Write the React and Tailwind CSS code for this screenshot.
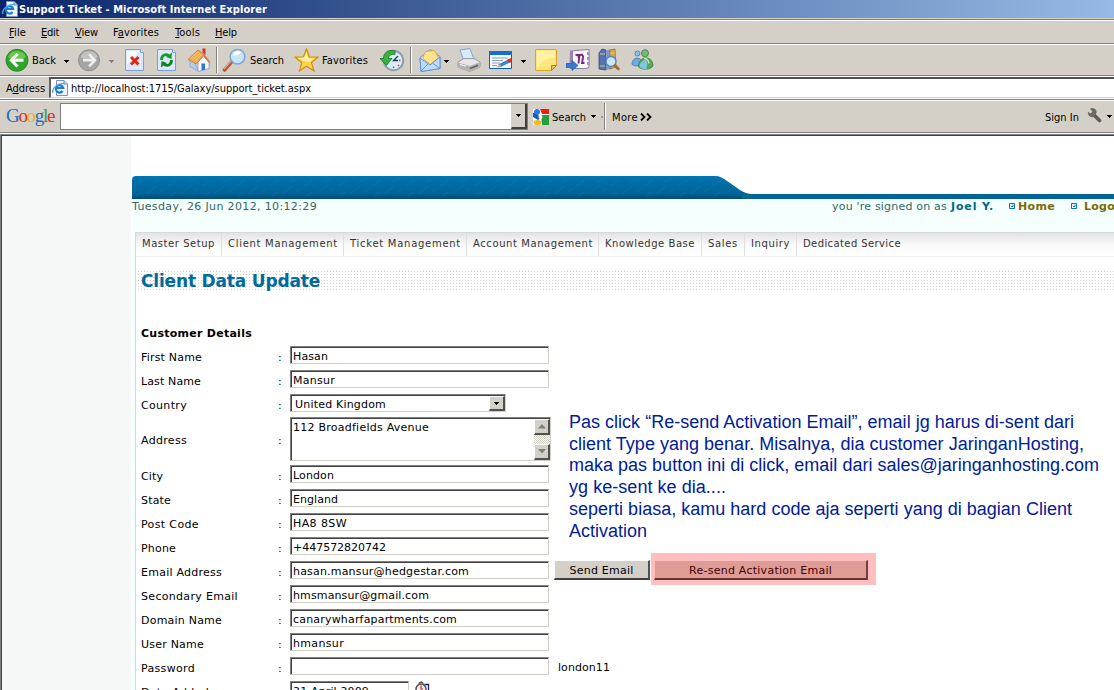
import { useLayoutEffect, useRef } from "react";

/* Single-line text whose letter spacing is adjusted so it fills its box. */
function Text({ children, className = "" }) {
  const ref = useRef(null);
  useLayoutEffect(() => {
    const el = ref.current;
    const inner = el.firstChild;
    const count = inner.textContent.length;
    inner.style.letterSpacing = "0px";
    const natural = inner.getBoundingClientRect().width;
    inner.style.letterSpacing = `${(el.clientWidth - natural) / count}px`;
  }, []);
  return (
    <span ref={ref} className={`block shrink-0 whitespace-nowrap ${className}`}>
      <span className="inline-block">{children}</span>
    </span>
  );
}

const UI = "font-['DejaVu_Sans_Condensed','DejaVu_Sans',sans-serif] text-[11px] leading-[14px]";

function Caret({ className = "", fill = "#000" }) {
  return (
    <svg className={`shrink-0 ${className}`} width="5" height="3" viewBox="0 0 5 3" shapeRendering="crispEdges">
      <path d="M0 0h5v1H0zM1 1h3v1H1zM2 2h1v1H2z" fill={fill} />
    </svg>
  );
}

function Icon({ w = 24, h = 24, className = "", children }) {
  return (
    <svg className={`shrink-0 ${className}`} width={w} height={h} viewBox={`0 0 ${w} ${h}`} fill="none">
      {children}
    </svg>
  );
}

function PageIcon({ className = "" }) {
  return (
    <Icon w={16} h={16} className={className}>
      <path d="M4.500.500h7.500l3.500 3.500v11.500h-11z" fill="#f2f6ff" stroke="#7d8fc0" />
      <path d="M12 .500v3.500h3.500" fill="#c5d3f2" stroke="#7d8fc0" />
      <path d="M10.600 11a3.700 3.700 0 1 1 .6-3H4.500" stroke="#1d7bd6" strokeWidth="2.200" />
      <path d="M1 13C-1 9 6 3 12.500 3.500" stroke="#4aa7ec" strokeWidth="1.300" />
    </Icon>
  );
}

function Divider({ className = "" }) {
  return <div className={`w-[2px] shrink-0 border-l border-[#808080] bg-white ${className}`} />;
}

const menus = [
  ["F", "ile", "w-[17px] ml-[9px]"],
  ["E", "dit", "w-[18px] ml-[15px]"],
  ["V", "iew", "w-[23px] ml-[16px]"],
  ["", "Favorites", "w-[46px] ml-[15px]"],
  ["T", "ools", "w-[25px] ml-[16px]"],
  ["H", "elp", "w-[22px] ml-[15px]"],
];

function MenuBar() {
  return (
    <div className="flex h-[22px] items-center pt-[2px]">
      {menus.map(([key, rest, cls]) => (
        <Text key={rest} className={cls}>
          {key ? (
            <>
              <u>{key}</u>
              {rest}
            </>
          ) : (
            <>
              F<u>a</u>vorites
            </>
          )}
        </Text>
      ))}
    </div>
  );
}

function Toolbar() {
  return (
    <div className="flex h-[30px] items-center">
      <Icon className="ml-[5px]">
        <circle cx="12" cy="12.300" r="11" fill="#2fa52b" stroke="#1b7d1e" strokeWidth=".8" />
        <path d="M3 9a9.500 9 0 0 1 18 0c-4 3-13 4-18 0z" fill="#7fd45f" opacity=".75" />
        <path d="M12.500 6 6.300 12.300l6.200 6.200M7 12.300H18.500" stroke="#fff" strokeWidth="3" />
      </Icon>
      <Text className="ml-[3px] w-[24px] pt-[2px]">Back</Text>
      <Caret className="mt-[2px] ml-[8px]" />
      <Icon className="ml-[8px]">
        <circle cx="12" cy="12.300" r="10.500" fill="#a5a5a3" stroke="#8b8b89" />
        <path d="M3.500 9a9 8.500 0 0 1 17 0c-4 3-12 4-17 0z" fill="#c9c9c7" opacity=".8" />
        <path d="m12 6.300 6 6-6 6M17.500 12.300H6" stroke="#f0f0ee" strokeWidth="2.600" />
      </Icon>
      <Caret className="mt-[2px] ml-[8px]" fill="#808080" />
      <Icon w={20} className="ml-[11px]">
        <path d="M.5 1.500h15l3 3v18H.5z" fill="#dce9fc" stroke="#7b9ddb" />
        <path d="M2 3h12l-6 8-6 5z" fill="#f6faff" />
        <path d="M15.500 1.500v3h3" fill="#fff" stroke="#7b9ddb" />
        <path d="m6 9 7.500 7.500M13.500 9 6 16.500" stroke="#e2280b" strokeWidth="3" />
      </Icon>
      <Icon w={20} className="ml-[12px]">
        <path d="M.5 1.500h15l3 3v18H.5z" fill="#dce9fc" stroke="#7b9ddb" />
        <path d="M15.500 1.500v3h3" fill="#fff" stroke="#7b9ddb" />
        <path d="M4.500 12c0-5 4-6.500 7-4.500" stroke="#159a26" strokeWidth="2.800" />
        <path d="m15 4.500-.5 6.500-5.500-2z" fill="#159a26" />
        <path d="M14.500 12c0 5-4 6.500-7 4.500" stroke="#0d8320" strokeWidth="2.800" />
        <path d="m4 19.500.5-6.500 5.500 2z" fill="#0d8320" />
      </Icon>
      <Icon className="ml-[10px]">
        <path d="m3 13 2-2 6 10.500V23l-8-4.500z" fill="#b7cdf0" stroke="#7c97c9" strokeWidth=".7" />
        <path d="m11 14 5.500-6 5.500 6.500v6L11 23.500z" fill="#f3f8ff" stroke="#7c97c9" strokeWidth=".8" />
        <path d="M14.500 15.500h3.500v6.300l-3.500.7z" fill="#3a72c4" />
        <path d="M1 11.500 11 2l6 4.500-7.500 9.500z" fill="#f2a94b" stroke="#c9742a" strokeWidth=".8" />
        <path d="m3.500 10.500 7-6.500M5.500 12l7.500-6.500M8 13.500l6.500-7" stroke="#ffd791" strokeWidth=".8" />
        <path d="m16.500 6.500 6.300 8" stroke="#d1813a" strokeWidth="1.800" />
        <path d="M15.500.500h3V7l-3-2.500z" fill="#c93d24" />
      </Icon>
      <Divider className="ml-[5px] h-[26px]" />
      <Icon w={25} className="ml-[4px]">
        <path d="m2.500 22 7-8" stroke="#b25b37" strokeWidth="3.600" strokeLinecap="round" />
        <path d="m2 21 7-8" stroke="#eda27f" strokeWidth="1.300" />
        <circle cx="15.500" cy="8.700" r="7.300" fill="#c9e5fb" stroke="#7ba6d8" strokeWidth="1.500" />
        <path d="M11 8a5 5 0 0 1 8-4c-1 3-5 3-8 4z" fill="#fff" />
      </Icon>
      <Text className="ml-[3px] w-[34px] pt-[2px]">Search</Text>
      <Icon w={25} className="ml-[10px]">
        <path d="m12.500 1 2.800 7.800 8.700.2-6.500 5.800 2.500 8.200-7.500-4.700L5.500 23l2.200-8.200L1 9l8.500-.2z" fill="#fbd24a" stroke="#d08d12" strokeWidth="1.200" />
        <path d="M12.500 4 14 10l6 .5-5 3.500-6-1-5-3 6-.5z" fill="#fff1a0" />
      </Icon>
      <Text className="ml-[3px] w-[46px] pt-[2px]">Favorites</Text>
      <Icon w={25} className="ml-[12px]">
        <circle cx="13.500" cy="12.500" r="9.700" fill="#d9ecfa" stroke="#8d9fae" strokeWidth="2" />
        <path d="M13.500 18.500V20M20.500 12.500H19M18 17l1 1" stroke="#e33b2f" strokeWidth="1.500" />
        <path d="m18 8-4.500 4.500H18" stroke="#263b51" strokeWidth="1.300" />
        <path d="M15 3C8 1 3.500 5 3.500 10.500H0l6.500 7 5.500-7H8.500c0-3 2.500-4.500 6.500-4z" fill="#3fb142" stroke="#157325" strokeWidth=".8" />
      </Icon>
      <Divider className="ml-[5px] h-[26px]" />
      <Icon w={22} className="ml-[7px]">
        <path d="m1 9.500 10-8 10 7v12L2 23.500z" fill="#d8ebff" stroke="#6791d0" />
        <path d="m3.500 10 3-6.500 9-1 4 7-8 7z" fill="#ffe489" stroke="#e1a94a" />
        <path d="M1 10 11 17l10-8v11.500L2 23.500z" fill="#bcdcfb" stroke="#6791d0" />
        <path d="m2 23 7-7M21 20.500l-7-5" stroke="#6791d0" />
      </Icon>
      <Caret className="mt-[2px] ml-[3px]" />
      <Icon w={25} className="ml-[8px]">
        <path d="m3 2 10-1.500 4 11-10 2z" fill="#d7ebff" stroke="#7d9cd0" strokeWidth=".9" />
        <path d="M1 14 7 10.500h10l6 3.500v5l-10 4.500L1 19z" fill="#e6e6e6" stroke="#8c8c8c" strokeWidth=".8" />
        <path d="M1 14.500 13 18l10-4v5l-10 4.500L1 19z" fill="#b3b3b3" />
        <path d="m13 20.500 8-3.200" stroke="#5f5f5f" strokeWidth="1.500" />
        <path d="m3 16.500 6 1.700" stroke="#fff" />
      </Icon>
      <Icon className="ml-[7px]">
        <path d="M.5 3.500h22v17H.5z" fill="#f4f9ff" stroke="#0b5fbd" />
        <path d="M0 3h23v4H0z" fill="#116fd2" />
        <path d="M3 10h16M3 12.500h11M3 15h8M3 17.500h5" stroke="#8ba0b5" />
        <path d="m10 18 10-5" stroke="#3f86cf" strokeWidth="3.500" />
        <path d="m19 13.500 3.500-1.700" stroke="#d9331f" strokeWidth="3.800" />
        <path d="m7 19.500 4-3.500 1 3z" fill="#e8aa58" />
      </Icon>
      <Caret className="mt-[2px] ml-[8px]" />
      <Icon className="ml-[9px]">
        <path d="M.5 1.500h21v16l-5 5H.5z" fill="#ffe67a" stroke="#e0a526" />
        <path d="M2 3h18v6L9 12l-7 7z" fill="#fff1a5" />
        <path d="M21.500 17.500h-5v5z" fill="#f5c244" stroke="#b57c12" />
      </Icon>
      <Icon className="ml-[7px]">
        <path d="m4.500 3 18.500-1.500v18l-3 1H4z" fill="#fbf9fe" stroke="#8d7ba8" />
        <path d="m4.500 3 2.500-.300V18H4z" fill="#9a83b9" />
        <path d="M21 4h2.500v3H21zM21 9h2.500v3H21zM21 14h2.500v3H21z" fill="#a38fc4" />
        <path d="M9.500 7h4l-1 8.500M12 9.500c2-4 5.500-3.500 5 0l-1 5.500h2.500" stroke="#792982" strokeWidth="1.900" />
        <path d="M0 15.500h6v-3l6 5-6 5v-3H0z" fill="#3779d2" stroke="#2156a3" strokeWidth=".7" />
      </Icon>
      <Icon className="ml-[8px]">
        <path d="m1 5 3-4 4 1v20l-7-1z" fill="#5571b0" stroke="#334b87" strokeWidth=".8" />
        <path d="m8 3 4-2v20l-4 1z" fill="#8199d1" />
        <path d="m12 2 5-1 1 18-6 2z" fill="#d8a846" stroke="#9a6f23" strokeWidth=".8" />
        <path d="M2 6h5M2 18h5M12 5h5" stroke="#e2cc75" />
        <circle cx="13" cy="13.500" r="5" fill="#c9e7fc" stroke="#5585bd" strokeWidth="1.300" />
        <path d="m17 17.500 3.500 3.500" stroke="#a66a2a" strokeWidth="2.800" strokeLinecap="round" />
      </Icon>
      <Icon w={25} className="ml-[8px]">
        <path d="M2 16.500C2 8 12 8 12 16c-3 2.500-7 2.500-10 .5z" fill="#70aadf" stroke="#4379ae" strokeWidth=".8" />
        <circle cx="7.500" cy="5.500" r="2.500" fill="#8cc0ea" stroke="#3d76b5" strokeWidth=".8" />
        <path d="M8.500 19c0-12 14.500-12 14.500-1-3 4-11 4-14.500 1z" fill="#58a85a" stroke="#32804b" strokeWidth=".8" />
        <path d="M9.500 19c0-4 3-7 6.500-7 3 3 0 6 1 9-3 .5-5.500-.5-7.500-2z" fill="#83c4df" />
        <circle cx="15" cy="5.200" r="3.500" fill="#77b979" stroke="#34784a" strokeWidth=".8" />
        <path d="M14 10.500c3 0 4.500 1.500 5 5" stroke="#c5ecaa" strokeWidth="1.300" />
      </Icon>
    </div>
  );
}

function AddressBar() {
  return (
    <div className="flex h-[21px]">
      <Text className="ml-[6px] mt-[5px] w-[39px]">
        A<u>d</u>dress
      </Text>
      <div className="ml-[4px] flex grow items-center border-b border-l-2 border-t-2 border-b-[#d4d0c8] border-l-[#606060] border-t-[#505050] bg-white">
        <PageIcon className="ml-px" />
        <Text className="ml-[3px] w-[240px] pt-[2px]">http://localhost:1715/Galaxy/support_ticket.aspx</Text>
      </div>
    </div>
  );
}

function GoogleBar() {
  return (
    <div className="flex h-[31px] items-center">
      <Text className="ml-[6px] mb-[2px] w-[48px] font-['Liberation_Serif',serif] text-[19px] leading-[22px]">
        <span className="text-[#1670bf]">G</span>
        <span className="text-[#de2c27]">o</span>
        <span className="text-[#eeb211]">o</span>
        <span className="text-[#1670bf]">g</span>
        <span className="text-[#28a34a]">l</span>
        <span className="text-[#de2c27]">e</span>
      </Text>
      <div className="ml-[6px] flex h-[27px] w-[468px] border border-[#808080] bg-white pl-[450px]">
        <div className="flex w-[16px] shrink-0 items-center justify-center border-b-2 border-l border-r-2 border-b-[#404040] border-r-[#404040] border-l-[#d4d0c8] bg-[#d4d0c8]">
          <Caret />
        </div>
      </div>
      <Icon w={16} h={16} className="ml-[5px]">
        <path d="M0 0h16v16H0z" fill="#fff" />
        <path d="M7 0h9v5H9z" fill="#f21c0d" />
        <path d="M8 6h8v10H9z" fill="#2b9b3f" />
        <path d="M0 4h3l5 5-3 2-5-3z" fill="#1558c0" />
        <circle cx="4" cy="3" r="3" fill="#2a76dc" />
        <circle cx="7.500" cy="8" r="2" fill="#fff" />
        <ellipse cx="4.500" cy="13.500" rx="4" ry="2.500" fill="#f5b51b" />
      </Icon>
      <Text className="ml-[3px] w-[34px] pt-[2px]">Search</Text>
      <Caret className="ml-[5px]" />
      <div className="ml-[5px] h-[2px] w-[2px] bg-[#999]" />
      <Divider className="ml-[1px] h-[27px]" />
      <Text className="ml-[6px] w-[26px] pt-[2px]">More</Text>
      <Icon w={12} h={8} className="ml-[2px]">
        <path d="m1 .5 3.500 3.500L1 7.500M7 .5 10.500 4 7 7.500" stroke="#000" strokeWidth="1.800" />
      </Icon>
      <Text className="ml-[393px] w-[34px] pt-[2px]">Sign In</Text>
      <Icon w={15} h={15} className="ml-[8px] mb-[2px]">
        <path d="m6 6 6.500 6.500" stroke="#5b5b54" strokeWidth="3.600" strokeLinecap="round" />
        <path d="M3 1a4 4 0 0 1 6 5 4 4 0 0 1-8-2l3 1.500 1.500-2z" fill="#6c6c64" />
      </Icon>
      <Caret className="ml-[5px]" />
    </div>
  );
}

const Rule = () => <div className="h-[2px] border-t border-[#808080] bg-white" />;

const nav = [
  ["Master Setup", "w-[73px]", "w-[86px]"],
  ["Client Management", "w-[110px]", "w-[122px]"],
  ["Ticket Management", "w-[111px]", "w-[123px]"],
  ["Account Management", "w-[120px]", "w-[132px]"],
  ["Knowledge Base", "w-[90px]", "w-[103px]"],
  ["Sales", "w-[30px]", "w-[43px]"],
  ["Inquiry", "w-[39px]", "w-[52px]"],
  ["Dedicated Service", "w-[98px]", ""],
];

function Field({ children, className = "w-[259px]" }) {
  return (
    <div className={`h-[18px] shrink-0 border border-[#808080] border-b-[#d4d0c8] border-r-[#d4d0c8] ${className}`}>
      <div className="flex h-[16px] border-l border-t border-[#404040] bg-white pl-px">{children}</div>
    </div>
  );
}

function Row({ label, w, height = "h-[24px]", pad = "pt-[2px]", children }) {
  return (
    <div className={`flex ${height}`}>
      <div className={`flex w-[137px] items-center ${pad}`}>
        <Text className={w}>{label}</Text>
      </div>
      <div className={`flex w-[12px] items-center ${pad}`}>:</div>
      <div className="flex items-start pt-px">{children}</div>
    </div>
  );
}

function Value({ children, w }) {
  return <Text className={`${w} leading-[18px]`}>{children}</Text>;
}

const details = [
  ["City", "w-[22px]", "London", "w-[41px]"],
  ["State", "w-[30px]", "England", "w-[45px]"],
  ["Post Code", "w-[58px]", "HA8 8SW", "w-[54px]"],
  ["Phone", "w-[35px]", "+447572820742", "w-[93px]"],
  ["Email Address", "w-[81px]", "hasan.mansur@hedgestar.com", "w-[176px]"],
  ["Secondary Email", "w-[97px]", "hmsmansur@gmail.com", "w-[136px]"],
  ["Domain Name", "w-[81px]", "canarywharfapartments.com", "w-[164px]"],
  ["User Name", "w-[63px]", "hmansur", "w-[51px]"],
  ["Password", "w-[54px]", "", ""],
];

const bevel = "border-l border-t border-b-2 border-r-2 border-l-white border-t-white border-r-[#505050] border-b-[#505050]";

function ScrollButton({ up }) {
  return (
    <div className={`flex h-[16px] items-center justify-center bg-[#d4d0c8] ${bevel}`}>
      <svg width="8" height="5" viewBox="0 0 8 5">
        <path d={up ? "M4 0 8 4.500H0z" : "M0 0h8L4 4.500z"} fill="#808080" />
      </svg>
    </div>
  );
}

function PushButton({ children, className }) {
  return (
    <button
      className={`flex h-[20px] shrink-0 items-center justify-center border-b-2 border-l border-r-2 border-t border-b-[#404040] border-l-white border-r-[#505050] border-t-white bg-[#d4d0c8] pt-[2px] ${className}`}
    >
      {children}
    </button>
  );
}

function CustomerForm() {
  return (
    <div className="pl-[5px] text-[11px] leading-[14px] text-black">
      <Text className="w-[111px] font-bold">Customer Details</Text>
      <div className="mt-[4px]">
        <Row label="First Name" w="w-[61px]">
          <Field>
            <Value w="w-[35px]">Hasan</Value>
          </Field>
        </Row>
        <Row label="Last Name" w="w-[60px]">
          <Field>
            <Value w="w-[42px]">Mansur</Value>
          </Field>
        </Row>
        <Row label="Country" w="w-[46px]">
          <Field className="w-[216px]">
            <div className="flex w-[196px] shrink-0 pl-[2px]">
              <Value w="w-[91px]">United Kingdom</Value>
            </div>
            <div className={`flex h-[15px] w-[16px] shrink-0 items-center justify-center bg-[#d4d0c8] ${bevel}`}>
              <Caret />
            </div>
          </Field>
        </Row>
        <Row label="Address" w="w-[46px]" height="h-[47px]" pad="">
          <div className="-mt-px h-[44px] w-[261px] border border-[#808080] border-b-[#d4d0c8] border-r-[#d4d0c8]">
            <div className="flex h-[42px] justify-between border-l border-t border-[#404040] pl-px">
              <Text className="w-[136px] leading-[18px]">112 Broadfields Avenue</Text>
              <div className="flex w-[16px] flex-col">
                <ScrollButton up />
                <div className="h-[9px] bg-[conic-gradient(#d4d0c8_25%,#ffffff_0_50%,#d4d0c8_0_75%,#ffffff_0)] bg-[length:2px_2px]" />
                <ScrollButton />
              </div>
            </div>
          </div>
        </Row>
        {details.map(([label, w, value, vw]) => (
          <Row key={label} label={label} w={w}>
            <Field>{value && <Value w={vw}>{value}</Value>}</Field>
            {label === "Email Address" && (
              <>
                <PushButton className="-mt-px ml-[5px] w-[96px]">
                  <Text className="w-[64px]">Send Email</Text>
                </PushButton>
                <PushButton className="-mt-px ml-[4px] w-[214px]">
                  <Text className="w-[143px]">Re-send Activation Email</Text>
                </PushButton>
              </>
            )}
            {label === "Password" && <Text className="ml-[9px] mt-[4px] w-[52px]">london11</Text>}
          </Row>
        ))}
        <Row label="Date Added" w="w-[68px]">
          <Field className="w-[119px]">
            <Value w="w-[76px]">21 April 2009</Value>
          </Field>
          <Icon w={18} h={18} className="ml-[5px]">
            <circle cx="7" cy="8" r="5" fill="#eee" stroke="#555" strokeWidth="1.500" />
            <path d="M4.500 2.500 7 1l2.500 1.500" stroke="#444" strokeWidth="1.300" />
            <path d="M7 4.500V8h2" stroke="#d22" strokeWidth="1.200" />
            <path d="M10.500 3.500h4v12h-4" stroke="#1c1c5c" strokeWidth="1.300" />
          </Icon>
        </Row>
      </div>
    </div>
  );
}

function Bullet({ className }) {
  return (
    <Icon w={6} h={6} className={className}>
      <path d="M.5.5h5v5h-5z" fill="#fff" stroke="#0a6fc4" />
      <path d="M2 3.500h2V1.500" stroke="#0a6fc4" />
    </Icon>
  );
}

const note = [
  ["Pas click “Re-send Activation Email”, email jg harus di-sent dari", "w-[505px]"],
  ["client Type yang benar. Misalnya, dia customer JaringanHosting,", "w-[515px]"],
  ["maka pas button ini di click, email dari sales@jaringanhosting.com", "w-[530px]"],
  ["yg ke-sent ke dia....", "w-[157px]"],
  ["seperti biasa, kamu hard code aja seperti yang di bagian Client", "w-[503px]"],
  ["Activation", "w-[78px]"],
];

export default function App() {
  return (
    <div className="relative flex h-[690px] w-[1114px] flex-col overflow-hidden bg-white">
      <div className={`shrink-0 bg-[#d4d0c8] text-black ${UI}`}>
        <div className="flex h-[18px] items-center bg-[linear-gradient(90deg,#0a246a_0px,#96bae4_1114px)]">
          <PageIcon className="ml-[2px]" />
          <Text className="ml-px w-[248px] pt-px font-bold text-white">Support Ticket - Microsoft Internet Explorer</Text>
        </div>
        <div className="mt-px">
          <Rule />
          <MenuBar />
          <Rule />
          <Toolbar />
          <Rule />
          <AddressBar />
          <div className="h-px bg-white" />
          <Rule />
          <GoogleBar />
          <Rule />
        </div>
      </div>

      <div className="flex grow border-l border-t border-[#808080]">
        <div className="flex grow border-l border-t border-[#404040]">
          <div className="w-[129px] shrink-0 bg-[#f6f8f7]" />
          <div className="ml-px w-[982px] shrink-0 font-['DejaVu_Sans',sans-serif]">
            <svg className="mt-[40px] block" width="982" height="23" viewBox="0 0 982 23">
              <defs>
                <linearGradient id="banner" x1="0" y1="0" x2="0" y2="1">
                  <stop offset="0" stopColor="#0076b4" />
                  <stop offset=".45" stopColor="#006a9f" />
                  <stop offset=".75" stopColor="#00659a" />
                  <stop offset="1" stopColor="#004d74" />
                </linearGradient>
                <pattern id="grain" width="34" height="23" patternUnits="userSpaceOnUse">
                  <path d="m2 10 9-6M14 18l11-8M22 7l8-5M4 20l6-4M28 16l5-3" stroke="#2388be" strokeWidth=".7" opacity=".3" />
                </pattern>
              </defs>
              <path d="M0 23V4q0-4 4-4h579c5 0 8 2 12 5l13 9q6 4 12 4h362v5z" fill="url(#banner)" />
              <path d="M0 23V4q0-4 4-4h579c5 0 8 2 12 5l13 9q6 4 12 4h362v5z" fill="url(#grain)" />
              <path d="M610 18h372v5H610z" fill="#006596" />
            </svg>

            <div className="bg-[#f5fffd]">
              <div className="flex h-[33px] text-[11px] leading-[16px] text-[#336666]">
                <Text className="w-[185px]">Tuesday, 26 Jun 2012, 10:12:29</Text>
                <Text className="ml-[515px] w-[115px]">you 're signed on as</Text>
                <Text className="ml-[4px] w-[43px] font-bold text-[#006b7d]">Joel Y.</Text>
                <Bullet className="ml-[15px] mt-[4px]" />
                <Text className="ml-[3px] w-[37px] font-bold text-[#7c6c05]">Home</Text>
                <Bullet className="ml-[16px] mt-[4px]" />
                <Text className="ml-[7px] w-[31px] font-bold text-[#7c6c05]">Logo</Text>
              </div>

              <div className="ml-[3px] border-l border-[#d3d7d7] bg-white">
                <div className="flex h-[25px] border-b border-t border-b-[#eeeeee] border-t-[#d5d9d9] bg-[linear-gradient(180deg,#e3e3e3_0px,#fbfbfb_13px,#ffffff_23px)] text-[10px] leading-[22px] text-[#333333]">
                  {nav.map(([label, w, cell]) => (
                    <div key={label} className={`shrink-0 pl-[6px] ${cell} ${cell ? "border-r border-[#dedede]" : ""}`}>
                      <Text className={w}>{label}</Text>
                    </div>
                  ))}
                </div>

                <div className="ml-px mt-[13px] h-[21px] bg-[radial-gradient(circle,#d2d2d2_0.6px,transparent_0.7px)] bg-[length:3px_3px]">
                  <Text className="ml-[4px] w-[179px] text-[17px] font-bold leading-[23px] text-[#006a9f]">
                    Client Data Update
                  </Text>
                </div>

                <div className="h-[36px]" />
                <CustomerForm />
              </div>
            </div>
          </div>
        </div>
      </div>

      <div className="absolute left-[569px] top-[412px] font-['Liberation_Sans',sans-serif] text-[18px] leading-[21.7px] text-[#00209a]">
        {note.map(([line, w]) => (
          <Text key={line} className={w}>
            {line}
          </Text>
        ))}
      </div>
      <div className="absolute left-[651px] top-[553px] h-[32px] w-[225px] bg-[#ff0000]/25" />
    </div>
  );
}
